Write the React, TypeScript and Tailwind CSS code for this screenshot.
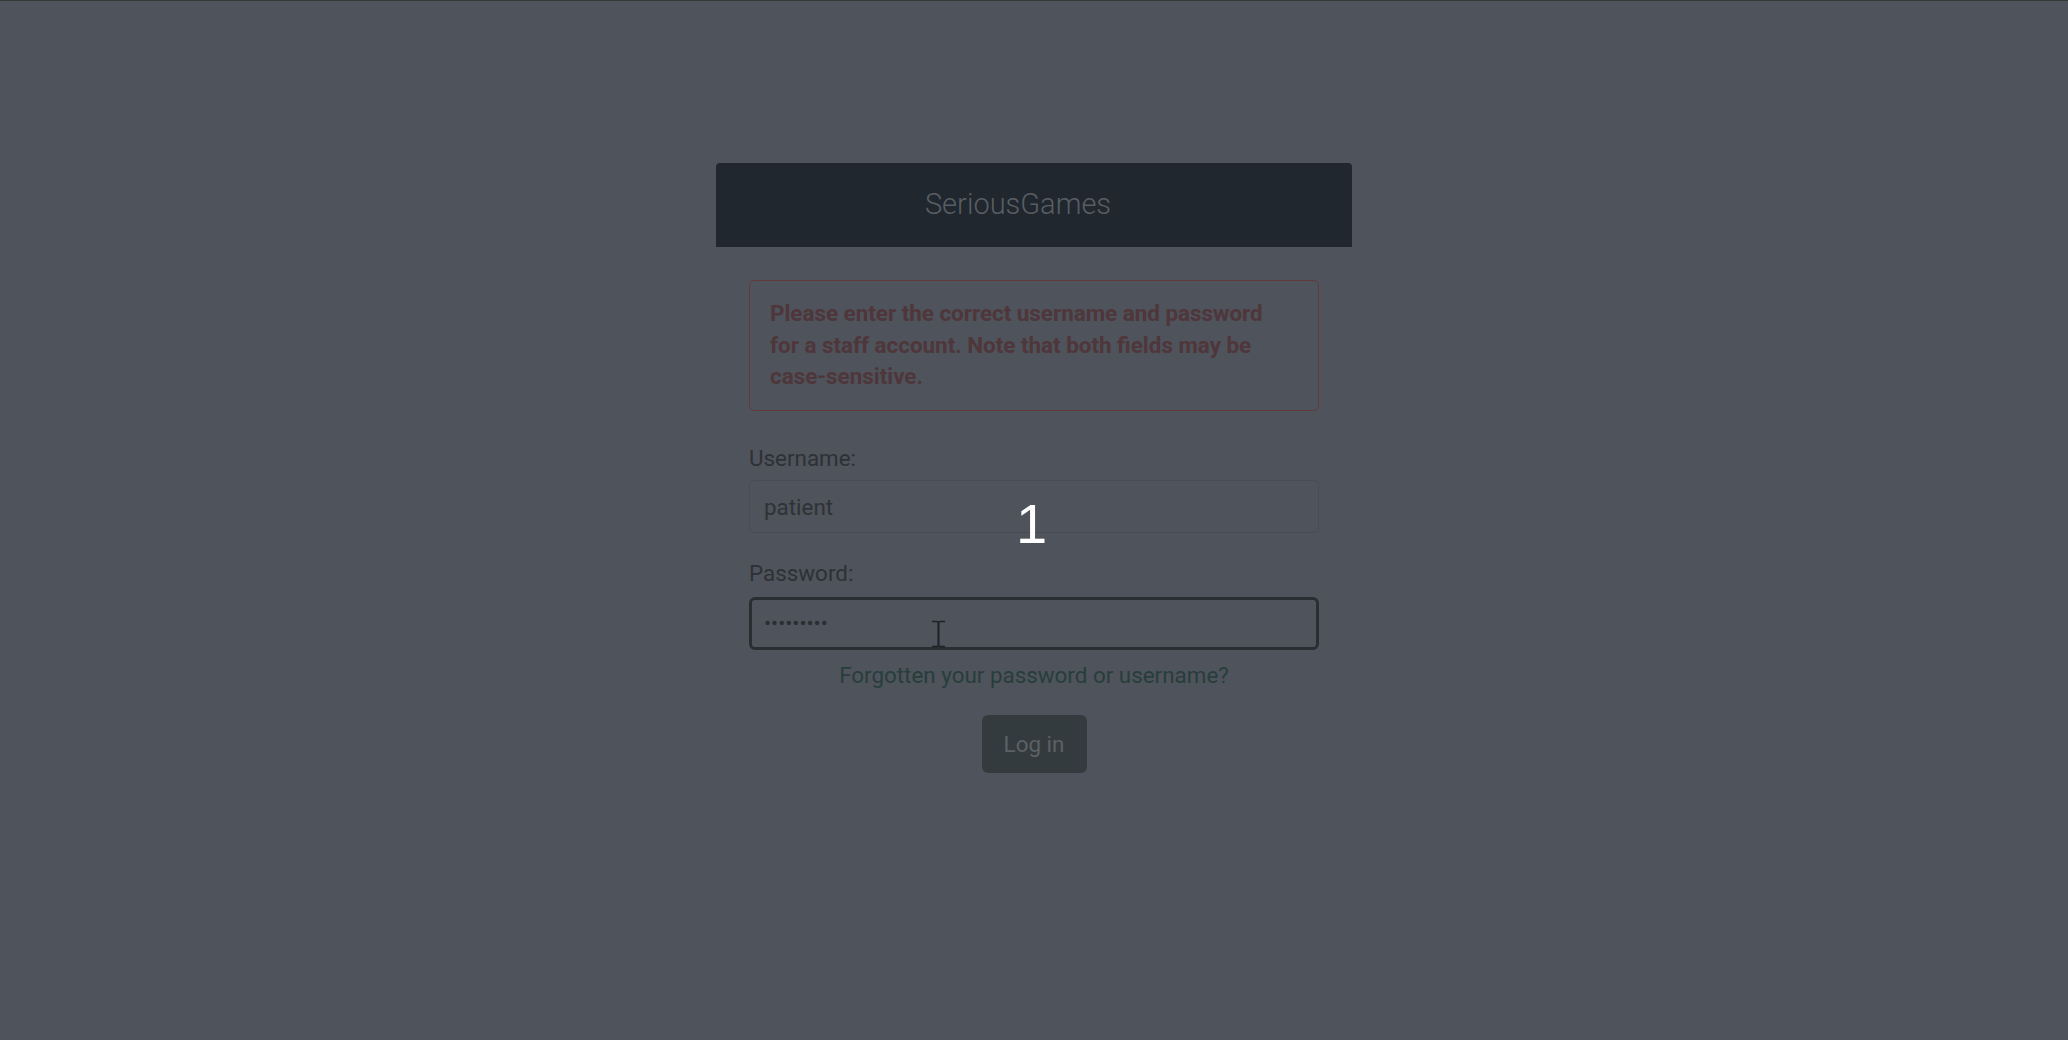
import React from "react";

const font = { fontFamily: "Roboto, 'Noto Sans', 'Liberation Sans', sans-serif" };

function IBeam() {
  return (
    <svg
      className="absolute left-[931px] top-[620px] pointer-events-none"
      width="15"
      height="28"
      viewBox="0 0 15 28"
      fill="none"
      stroke="#1f2226"
      strokeWidth="1.6"
    >
      <path d="M1 1.5h4.5c1 0 2 .8 2 2v21c0 1.2-1 2-2 2H1" />
      <path d="M14 1.5H9.5c-1 0-2 .8-2 2v21c0 1.2 1 2 2 2H14" />
    </svg>
  );
}

export default function App() {
  return (
    <div className="relative min-h-[1040px] w-full bg-[#4f535b]" style={font}>
      <div className="h-px w-full bg-[#353739]" />

      <div className="pt-[162px] flex justify-center">
        <div className="w-[636px]">
          {/* Header */}
          <div className="flex h-[84px] items-center justify-center rounded-t-[4px] bg-[#20272e]">
            <span className="mr-[32px] text-[29px] font-light text-[#585e64]">SeriousGames</span>
          </div>

          <div className="px-[33px]">
            {/* Error note */}
            <div className="mt-[33px] rounded-[5px] border border-[#623a3e] pl-[20px] pr-[34px] py-[17px]">
              <p className="text-[22.4px] font-bold leading-[31.5px] text-[#4e363a]">
                Please enter the correct username and password for a staff account. Note that both
                fields may be case-sensitive.
              </p>
            </div>

            {/* Form */}
            <form className="mt-[32px]" onSubmit={(e) => e.preventDefault()}>
              <label className="block text-[22.4px] leading-[31.5px] text-[#2d3136]">Username:</label>
              <input
                type="text"
                defaultValue="patient"
                className="mt-[6px] block h-[53px] w-full rounded-[5px] border border-[#484c53] bg-transparent px-[14px] text-[22.4px] text-[#2e3237] outline-none"
              />

              <label className="mt-[25px] block text-[22.4px] leading-[31.5px] text-[#2d3136]">
                Password:
              </label>
              <input
                type="password"
                defaultValue="123456789"
                className="mt-[7px] block h-[53px] w-full rounded-[6px] border-[3px] border-[#2a2e33] bg-transparent px-[12px] text-[21px] text-[#2a2e33] outline-none"
              />

              <div className="mt-[10px] text-center text-[22.4px] leading-[31.5px]">
                <a className="text-[#273e3c]" href="#">
                  Forgotten your password or username?
                </a>
              </div>

              <div className="mt-[24px] flex justify-center">
                <button
                  type="submit"
                  className="h-[58px] w-[105px] rounded-[6px] bg-[#343b3e] pt-[2px] text-[22.4px] text-[#5b6165]"
                >
                  Log in
                </button>
              </div>
            </form>
          </div>
        </div>
      </div>

      {/* step marker */}
      <span
        className="absolute left-[1016px] top-[496px] text-[56px] leading-none text-white"
        style={{ fontFamily: "'Liberation Sans', Arial, sans-serif" }}
      >
        1
      </span>
      <IBeam />
    </div>
  );
}
